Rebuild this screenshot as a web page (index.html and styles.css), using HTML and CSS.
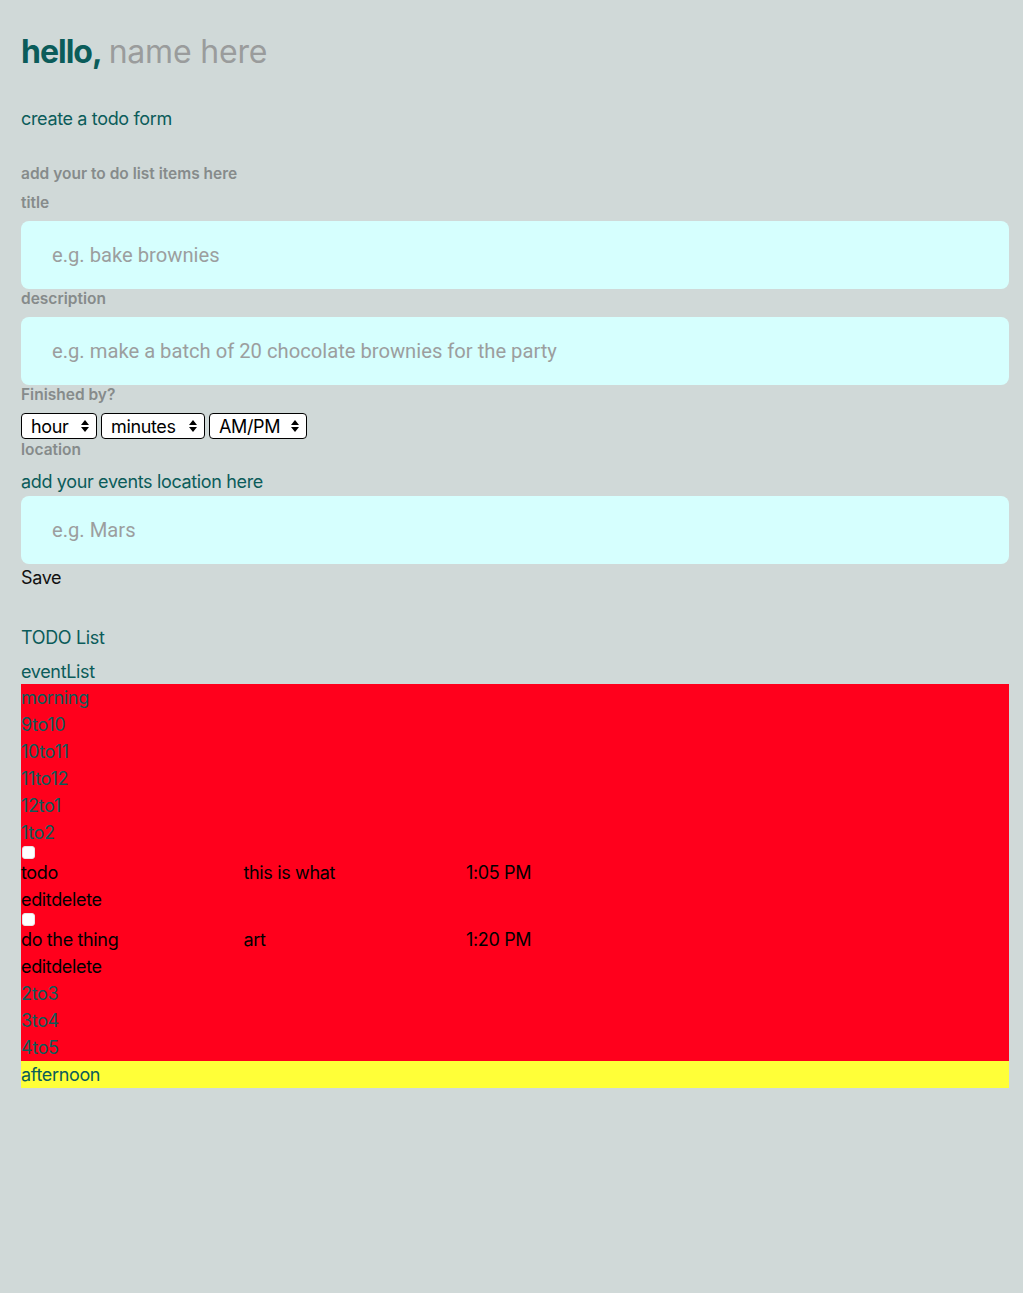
FILE: index.html
```html
<!DOCTYPE html>
<html>
<head>
<meta charset="utf-8">
<link rel="stylesheet" href="styles.css">
</head>
<body>
<div class="app">
  <h1 class="greeting"><span class="hello">hello,</span><span class="name">name here</span></h1>
  <h2 class="section-title form-title">create a todo form</h2>
  <form class="todo-form">
    <p class="label intro">add your to do list items here</p>
    <p class="label">title</p>
    <input class="field" type="text" placeholder="e.g. bake brownies">
    <p class="label">description</p>
    <input class="field" type="text" placeholder="e.g. make a batch of 20 chocolate brownies for the party">
    <p class="label">Finished by?</p>
    <div class="selects">
      <span class="sel w-hour"><select><option>hour</option></select><svg class="arrow" viewBox="0 0 8 12"><path d="M4 0 L8 5 H0 Z M4 12 L8 7 H0 Z" fill="#000"/></svg></span>
      <span class="sel w-min"><select><option>minutes</option></select><svg class="arrow" viewBox="0 0 8 12"><path d="M4 0 L8 5 H0 Z M4 12 L8 7 H0 Z" fill="#000"/></svg></span>
      <span class="sel w-ampm"><select><option>AM/PM</option></select><svg class="arrow" viewBox="0 0 8 12"><path d="M4 0 L8 5 H0 Z M4 12 L8 7 H0 Z" fill="#000"/></svg></span>
    </div>
    <p class="label">location</p>
    <p class="section-title loc-title">add your events location here</p>
    <input class="field" type="text" placeholder="e.g. Mars">
    <div class="save">Save</div>
  </form>
  <h2 class="section-title list-title">TODO List</h2>
  <div class="section-title event-title">eventList</div>
  <div class="morning">
    <div class="row">morning</div>
    <div class="row">9to10</div>
    <div class="row">10to11</div>
    <div class="row">11to12</div>
    <div class="row">12to1</div>
    <div class="row">1to2</div>
    <div class="item">
      <span class="check"></span>
      <div class="cols"><span class="col">todo</span><span class="col">this is what</span><span class="col">1:05 PM</span></div>
      <div class="actions">editdelete</div>
    </div>
    <div class="item">
      <span class="check"></span>
      <div class="cols"><span class="col">do the thing</span><span class="col">art</span><span class="col">1:20 PM</span></div>
      <div class="actions">editdelete</div>
    </div>
    <div class="row">2to3</div>
    <div class="row">3to4</div>
    <div class="row">4to5</div>
  </div>
  <div class="afternoon row">afternoon</div>
</div>
</body>
</html>
```

FILE: styles.css
```css
html, body {
  margin: 0;
  padding: 0;
  background: #d0d9d8;
}
body {
  font-family: Inter, "Noto Sans", sans-serif;
  color: #0b5c5a;
}
.app {
  padding: 32px 14px 40px 21px;
}
.greeting {
  margin: 0;
  font-size: 32px;
  line-height: 40px;
  font-weight: 400;
}
.hello {
  font-weight: 700;
  color: #0b5c5a;
  letter-spacing: -1px;
  margin-right: 7px;
}
.name {
  color: #9a9c9c;
  letter-spacing: -0.2px;
}
.section-title {
  margin: 0;
  font-size: 18px;
  font-weight: 400;
  line-height: 24px;
  color: #0b5c5a;
  letter-spacing: -0.35px;
}
.form-title {
  margin-top: 35px;
}
.todo-form {
  margin-top: 33px;
}
.label {
  margin: 0;
  font-size: 15.5px;
  line-height: 20px;
  font-weight: 600;
  color: #868b8b;
}
.intro {
  margin-bottom: 9px;
}
.field {
  display: block;
  box-sizing: border-box;
  width: 100%;
  height: 68px;
  margin: 8px 0 0;
  padding: 0 31px;
  border: none;
  border-radius: 8px;
  background: #d6fffe;
  font-family: Roboto, "Noto Sans", sans-serif;
  font-size: 20.2px;
  outline: none;
}
.field::placeholder {
  color: #9c9e9e;
}
.selects {
  display: flex;
  gap: 4px;
  margin-top: 8px;
  height: 26px;
}
.sel {
  position: relative;
  display: block;
  height: 26px;
}
.sel select {
  -webkit-appearance: none;
  appearance: none;
  box-sizing: border-box;
  width: 100%;
  height: 26px;
  border: 1px solid #000;
  border-radius: 4px;
  background: #fff;
  font-family: Inter, "Noto Sans", sans-serif;
  font-size: 18px;
  letter-spacing: -0.35px;
  color: #000;
  padding: 0 0 0 9px;
  margin: 0;
}
.arrow {
  position: absolute;
  right: 8px;
  top: 7px;
  width: 8px;
  height: 12px;
  pointer-events: none;
}
.w-hour { width: 76px; }
.w-min { width: 104px; }
.w-ampm { width: 98px; }
.selects + .label {
  margin-top: 1px;
}
.loc-title {
  margin-top: 10px;
  margin-bottom: -6px;
}
.save {
  font-size: 18px;
  line-height: 28px;
  color: #111;
  letter-spacing: -0.35px;
}
.list-title {
  margin-top: 34px;
}
.event-title {
  margin-top: 10px;
  line-height: 24px;
}
.morning {
  background: #ff001c;
}
.row {
  font-size: 18px;
  line-height: 27px;
  color: #0b5c5a;
  letter-spacing: -0.35px;
}
.afternoon {
  background: #ffff38;
}
.item {
  color: #000;
  font-size: 18px;
  line-height: 27px;
  letter-spacing: -0.35px;
}
.check {
  display: block;
  box-sizing: border-box;
  width: 13px;
  height: 13px;
  margin: 0 0 0 1px;
  background: #fff;
  border-radius: 3px;
  border: 1px solid #e6e6e6;
}
.cols {
  display: flex;
}
.col {
  width: 222.5px;
}
.actions {
  color: #000;
}
```
